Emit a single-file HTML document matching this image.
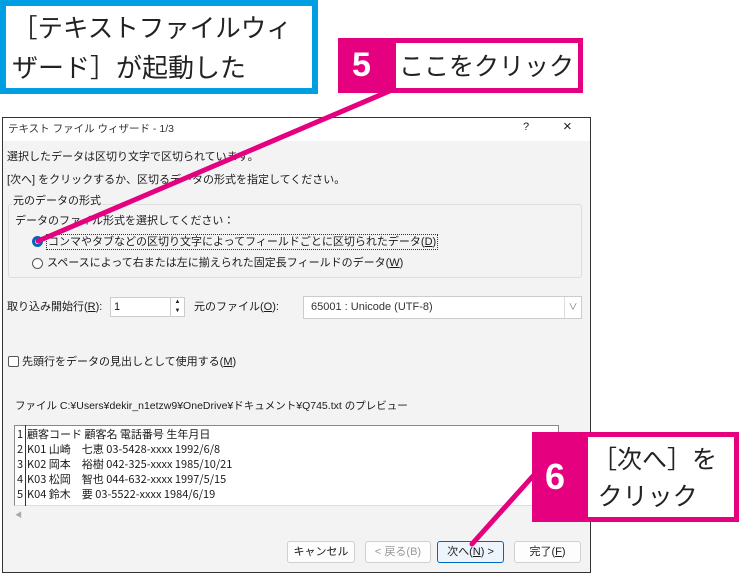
<!DOCTYPE html>
<html><head><meta charset="utf-8"><style>
*{margin:0;padding:0;box-sizing:border-box}
body{width:739px;height:573px;background:#fff;position:relative;overflow:hidden;font-family:"Liberation Sans","Noto Sans CJK JP",sans-serif;color:#1a1a1a}
.a{position:absolute;white-space:nowrap}
.s{font-size:11px;line-height:14px}
.btn{position:absolute;top:541px;height:22px;border:1px solid #cfcfcf;background:#fdfdfd;border-radius:3px;font-size:11px;line-height:20px;text-align:center}
.pv{font-family:"Noto Sans CJK JP",sans-serif;font-size:11px;line-height:15px}
.big{font-family:"Noto Sans CJK JP",sans-serif;color:#222}
</style></head><body>
<div class="a" style="left:0;top:0;width:318px;height:94px;border:6px solid #009fe3;background:#fff"></div>
<div class="a big" style="left:12px;top:8px;font-size:25.5px;line-height:38px">［テキストファイルウィ</div>
<div class="a big" style="left:12px;top:48px;font-size:26px;line-height:38px">ザード］が起動した</div>

<div class="a" style="left:338px;top:38px;width:245px;height:55px;background:#e4007f"></div>
<div class="a" style="left:396px;top:43px;width:182px;height:45px;background:#fff"></div>
<div class="a" style="left:352px;top:40px;font-size:34px;line-height:50px;color:#fff;font-weight:bold">5</div>
<div class="a big" style="left:399px;top:45px;font-size:25px;line-height:40px">ここをクリック</div>

<div class="a" style="left:2px;top:117px;width:589px;height:456px;border:1px solid #333;background:#f3f3f3"></div>
<div class="a" style="left:3px;top:118px;width:587px;height:23px;background:#fff"></div>
<div class="a s" style="left:8px;top:122px;font-size:10.5px;color:#333">テキスト ファイル ウィザード - 1/3</div>
<div class="a" style="left:523px;top:121px;font-size:11px">?</div>
<div class="a" style="left:563px;top:118px;font-size:15px">×</div>
<div class="a s" style="left:7px;top:150px">選択したデータは区切り文字で区切られています。</div>
<div class="a s" style="left:7px;top:173px">[次へ] をクリックするか、区切るデータの形式を指定してください。</div>
<div class="a" style="left:8px;top:204px;width:574px;height:74px;border:1px solid #ddd;border-radius:3px"></div>
<div class="a s" style="left:12px;top:194px;background:#f3f3f3;padding:0 1px">元のデータの形式</div>
<div class="a s" style="left:15px;top:214px">データのファイル形式を選択してください：</div>
<div class="a" style="left:32px;top:236px;width:11px;height:11px;border-radius:50%;border:3px solid #0067c0;background:#fff"></div>
<div class="a s" style="left:46px;top:234px;border:1px dotted #333;padding:0 1px">コンマやタブなどの区切り文字によってフィールドごとに区切られたデータ(<u>D</u>)</div>
<div class="a" style="left:32px;top:258px;width:11px;height:11px;border-radius:50%;border:1px solid #555;background:#fff"></div>
<div class="a s" style="left:47px;top:256px">スペースによって右または左に揃えられた固定長フィールドのデータ(<u>W</u>)</div>
<div class="a s" style="left:7px;top:300px">取り込み開始行(<u>R</u>):</div>
<div class="a" style="left:110px;top:297px;width:75px;height:20px;background:#fff;border:1px solid #ccc"></div>
<div class="a" style="left:170px;top:298px;width:14px;height:18px;border-left:1px solid #ccc;font-size:6px;line-height:9px;text-align:center">▲<br>▼</div>
<div class="a s" style="left:114px;top:300px">1</div>
<div class="a s" style="left:194px;top:300px">元のファイル(<u>O</u>):</div>
<div class="a" style="left:303px;top:296px;width:279px;height:23px;background:#fff;border:1px solid #ccc"></div>
<div class="a" style="left:564px;top:297px;width:17px;height:21px;border-left:1px solid #ddd;font-size:9px;line-height:21px;text-align:center;color:#777">∨</div>
<div class="a s" style="left:311px;top:300px;color:#333">65001 : Unicode (UTF-8)</div>
<div class="a" style="left:8px;top:356px;width:11px;height:11px;border:1px solid #555;border-radius:2px;background:#fff"></div>
<div class="a s" style="left:22px;top:355px">先頭行をデータの見出しとして使用する(<u>M</u>)</div>
<div class="a s" style="left:15px;top:399px;font-size:10.5px">ファイル C:¥Users¥dekir_n1etzw9¥OneDrive¥ドキュメント¥Q745.txt のプレビュー</div>
<div class="a" style="left:14px;top:425px;width:545px;height:81px;background:#fff;border:1px solid #888;border-bottom:1px solid #ddd"></div>
<div class="a" style="left:14px;top:425px;width:12px;height:81px;border-right:1px solid #333"></div>
<div class="a pv" style="left:17px;top:427px">1<br>2<br>3<br>4<br>5</div>
<div class="a pv" style="left:27px;top:427px">顧客コード 顧客名 電話番号 生年月日<br>K01 山崎　七恵 03-5428-xxxx 1992/6/8<br>K02 岡本　裕樹 042-325-xxxx 1985/10/21<br>K03 松岡　智也 044-632-xxxx 1997/5/15<br>K04 鈴木　要 03-5522-xxxx 1984/6/19</div>
<div class="a" style="left:15px;top:510px;font-size:7px;color:#aaa">◀</div>
<div class="btn" style="left:287px;width:68px">キャンセル</div>
<div class="btn" style="left:365px;width:66px;color:#999">&lt; 戻る(B)</div>
<div class="btn" style="left:437px;width:67px;border-color:#0067c0;background:#eef4fb">次へ(<u>N</u>) &gt;</div>
<div class="btn" style="left:514px;width:67px">完了(<u>F</u>)</div>

<div class="a" style="left:532px;top:432px;width:207px;height:90px;background:#e4007f"></div>
<div class="a" style="left:588px;top:437px;width:146px;height:80px;background:#fff"></div>
<div class="a" style="left:545px;top:452px;font-size:36px;line-height:50px;color:#fff;font-weight:bold">6</div>
<div class="a big" style="left:592px;top:440px;font-size:25px;line-height:37px">［次へ］を<br>&nbsp;クリック</div>

<svg class="a" style="left:0;top:0" width="739" height="573"><g stroke="#e4007f" stroke-width="5" stroke-linecap="round"><line x1="392" y1="90" x2="38" y2="241"/><line x1="533" y1="476" x2="472" y2="544"/></g></svg>
</body></html>
